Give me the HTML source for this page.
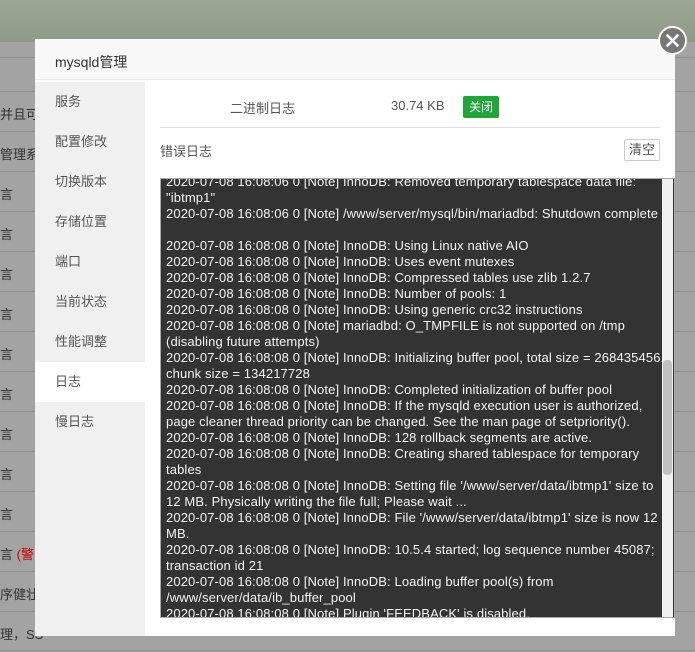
<!DOCTYPE html>
<html><head><meta charset="utf-8"><style>
*{margin:0;padding:0;box-sizing:border-box}
body{width:695px;height:652px;overflow:hidden;position:relative;font-family:"Liberation Sans","Noto Sans CJK SC",sans-serif;background:#a3a3a3}
.top{position:absolute;left:0;top:0;width:695px;height:42px;background:linear-gradient(#9ba893,#8e9a86)}
.bgrow{position:absolute;left:0;width:695px;height:1px;background:#8f8f8f}
.bgt{position:absolute;left:0;font-size:13px;color:#333}
.modal{position:absolute;left:35px;top:39px;width:640px;height:597px;background:#fff}
.hd{height:41px;background:#f8f8f8;border-bottom:1px solid #e8e8e8;font-size:14px;color:#333;padding:13px 0 0 20px}
.side{position:absolute;left:0;top:43px;width:110px;bottom:0;background:#f0f0f0}
.side div{height:40px;line-height:40px;padding-left:20px;font-size:13px;color:#555}
.side .on{background:#fff}
.close{position:absolute;left:658px;top:26px;width:29px;height:29px;border-radius:50%;background:#777;border:2px solid #fff}
.log{position:absolute;left:125px;top:139px;width:515px;height:440px;background:#333;border:1px solid #aaa;overflow:hidden}
.txt{position:absolute;left:5px;top:-5px;color:#f4f4f4;font-size:13px;line-height:16px;white-space:pre;letter-spacing:0.12px}
.sb{position:absolute;right:1px;top:0;width:11px;height:438px;background:#f1f1f1}
.th{position:absolute;left:1px;top:181px;width:9px;height:115px;background:#c1c1c1;border-radius:4px}
</style></head><body>
<div class="top"></div>
<div class="bgrow" style="top:57px"></div><div class="bgrow" style="top:91px"></div><div class="bgrow" style="top:131px"></div><div class="bgrow" style="top:171px"></div><div class="bgrow" style="top:211px"></div><div class="bgrow" style="top:251px"></div><div class="bgrow" style="top:291px"></div><div class="bgrow" style="top:331px"></div><div class="bgrow" style="top:371px"></div><div class="bgrow" style="top:411px"></div><div class="bgrow" style="top:451px"></div><div class="bgrow" style="top:491px"></div><div class="bgrow" style="top:531px"></div><div class="bgrow" style="top:571px"></div><div class="bgrow" style="top:611px"></div><div class="bgrow" style="top:650px"></div>
<div class="bgt" style="top:104px">并且可</div>
<div class="bgt" style="top:144px">管理系统</div>
<div class="bgt" style="top:184px">言</div><div class="bgt" style="top:224px">言</div><div class="bgt" style="top:264px">言</div><div class="bgt" style="top:304px">言</div><div class="bgt" style="top:344px">言</div><div class="bgt" style="top:384px">言</div><div class="bgt" style="top:424px">言</div><div class="bgt" style="top:464px">言</div><div class="bgt" style="top:504px">言</div>
<div class="bgt" style="top:544px">言 <span style="color:#c00">(警告</span></div>
<div class="bgt" style="top:584px">序健壮和</div>
<div class="bgt" style="top:624px">理，SS</div>
<div class="modal">
<div class="hd">mysqld管理</div>
<div class="side"><div>服务</div><div>配置修改</div><div>切换版本</div><div>存储位置</div><div>端口</div><div>当前状态</div><div>性能调整</div><div class="on">日志</div><div>慢日志</div></div>
<div style="position:absolute;left:125px;top:41px;width:500px;height:48px;border-bottom:1px solid #ddd;font-size:13px;color:#555">
<span style="position:absolute;left:70px;top:18px">二进制日志</span>
<span style="position:absolute;left:231px;top:18px">30.74 KB</span>
<span style="position:absolute;left:303px;top:16px;background:#20a53a;color:#fff;font-size:12px;padding:2px 6px;border-radius:2px;line-height:18px">关闭</span>
</div>
<div style="position:absolute;left:125px;top:102px;font-size:13px;color:#555">错误日志</div>
<div style="position:absolute;left:589px;top:100px;width:36px;height:22px;border:1px solid #ccc;border-radius:2px;font-size:13px;color:#555;line-height:20px;text-align:center">清空</div>
<div class="log"><div class="txt">2020-07-08 16:08:06 0 [Note] InnoDB: Removed temporary tablespace data file:
"ibtmp1"
2020-07-08 16:08:06 0 [Note] /www/server/mysql/bin/mariadbd: Shutdown complete

2020-07-08 16:08:08 0 [Note] InnoDB: Using Linux native AIO
2020-07-08 16:08:08 0 [Note] InnoDB: Uses event mutexes
2020-07-08 16:08:08 0 [Note] InnoDB: Compressed tables use zlib 1.2.7
2020-07-08 16:08:08 0 [Note] InnoDB: Number of pools: 1
2020-07-08 16:08:08 0 [Note] InnoDB: Using generic crc32 instructions
2020-07-08 16:08:08 0 [Note] mariadbd: O_TMPFILE is not supported on /tmp
(disabling future attempts)
2020-07-08 16:08:08 0 [Note] InnoDB: Initializing buffer pool, total size = 268435456,
chunk size = 134217728
2020-07-08 16:08:08 0 [Note] InnoDB: Completed initialization of buffer pool
2020-07-08 16:08:08 0 [Note] InnoDB: If the mysqld execution user is authorized,
page cleaner thread priority can be changed. See the man page of setpriority().
2020-07-08 16:08:08 0 [Note] InnoDB: 128 rollback segments are active.
2020-07-08 16:08:08 0 [Note] InnoDB: Creating shared tablespace for temporary
tables
2020-07-08 16:08:08 0 [Note] InnoDB: Setting file '/www/server/data/ibtmp1' size to
12 MB. Physically writing the file full; Please wait ...
2020-07-08 16:08:08 0 [Note] InnoDB: File '/www/server/data/ibtmp1' size is now 12
MB.
2020-07-08 16:08:08 0 [Note] InnoDB: 10.5.4 started; log sequence number 45087;
transaction id 21
2020-07-08 16:08:08 0 [Note] InnoDB: Loading buffer pool(s) from
/www/server/data/ib_buffer_pool
2020-07-08 16:08:08 0 [Note] Plugin 'FEEDBACK' is disabled.</div>
<div class="sb"><div class="th"></div></div></div>
</div>
<div class="close"><svg width="25" height="25" viewBox="0 0 25 25" style="position:absolute;left:0;top:0"><path d="M7.5 7.5L17.5 17.5M17.5 7.5L7.5 17.5" stroke="#fff" stroke-width="2.6" stroke-linecap="round"/></svg></div>
</body></html>
